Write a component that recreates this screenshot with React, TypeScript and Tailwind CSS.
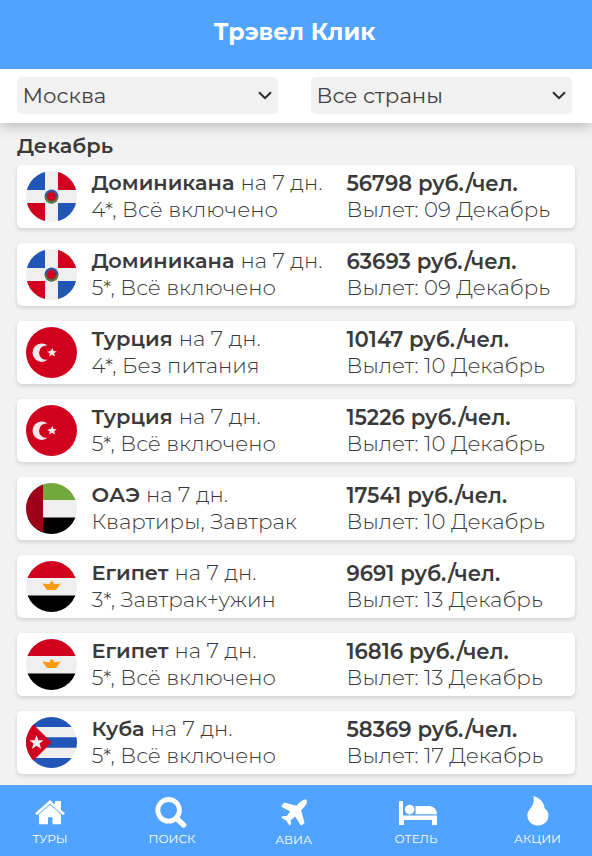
import React from "react";

type Country = "do" | "tr" | "ae" | "eg" | "cu";

interface Tour {
  flag: Country;
  country: string;
  details: string;
  price: string;
  departure: string;
}

const tours: Tour[] = [
  { flag: "do", country: "Доминикана", details: "4*, Всё включено", price: "56798", departure: "09 Декабрь" },
  { flag: "do", country: "Доминикана", details: "5*, Всё включено", price: "63693", departure: "09 Декабрь" },
  { flag: "tr", country: "Турция", details: "4*, Без питания", price: "10147", departure: "10 Декабрь" },
  { flag: "tr", country: "Турция", details: "5*, Всё включено", price: "15226", departure: "10 Декабрь" },
  { flag: "ae", country: "ОАЭ", details: "Квартиры, Завтрак", price: "17541", departure: "10 Декабрь" },
  { flag: "eg", country: "Египет", details: "3*, Завтрак+ужин", price: "9691", departure: "13 Декабрь" },
  { flag: "eg", country: "Египет", details: "5*, Всё включено", price: "16816", departure: "13 Декабрь" },
  { flag: "cu", country: "Куба", details: "5*, Всё включено", price: "58369", departure: "17 Декабрь" },
];

function FlagArt({ code }: { code: Country }) {
  switch (code) {
    case "do":
      return (
        <>
          <rect width="51" height="51" fill="#efefef" />
          <path d="M0 0H19V19H0ZM32 32H51V51H32Z" fill="#2255b8" />
          <path d="M32 0H51V19H32ZM0 32H19V51H0Z" fill="#d1001f" />
          <circle cx="25.5" cy="25.5" r="6.9" fill="#2f57a8" />
          <path d="M18.6 25.5a6.9 6.9 0 0 0 13.8 0Z" fill="#5b7a35" />
          <circle cx="25.5" cy="25.5" r="4.9" fill="#8a3446" />
          <circle cx="25.5" cy="25.5" r="4.1" fill="#d1001f" />
        </>
      );
    case "tr":
      return (
        <>
          <rect width="51" height="51" fill="#d1001f" />
          <path d="M21.8 18.8A9.2 9.2 0 1 0 21.8 32.6A7.1 7.1 0 1 1 21.8 18.8Z" fill="#f5e8eb" />
          <path d="M26.6 20.9L27.5 24L30.8 24.3L28.2 26.2L29 29.5L26 27.7L23.2 29.6L23.9 26.4L21.1 24.8L24.5 24.1Z" fill="#f5e8eb" />
        </>
      );
    case "ae":
      return (
        <>
          <rect width="51" height="51" fill="#efefef" />
          <path d="M0 0H51V17H0Z" fill="#73a83d" />
          <path d="M0 34.5H51V51H0Z" fill="#000" />
          <path d="M0 0H17V51H0Z" fill="#9e0019" />
        </>
      );
    case "eg":
      return (
        <>
          <rect width="51" height="51" fill="#efefef" />
          <path d="M0 0H51V17H0Z" fill="#d1001f" />
          <path d="M0 34.5H51V51H0Z" fill="#000" />
          <path d="M16.3 22.6L23.4 23.2L24.5 20.6H27L27.9 23.2L34.7 22.6L30 29H21Z" fill="#fb9b0d" />
        </>
      );
    case "cu":
      return (
        <>
          <rect width="51" height="51" fill="#efefef" />
          <path d="M0 0H51V10H0ZM0 20.3H51V30.7H0ZM0 41H51V51H0Z" fill="#2255b8" />
          <path d="M0 0L8 8L25.5 25.5L8 43L0 51Z" fill="#d1001f" />
          <path d="M10.5 18.2L12.4 23.2H17.7L13.5 26.6L15.1 32L10.5 28.8L5.9 32L7.5 26.6L3.3 23.2H8.6Z" fill="#f3f1f2" />
        </>
      );
  }
}

function Flag({ code }: { code: Country }) {
  return (
    <svg viewBox="0 0 51 51" className="h-[51px] w-[51px] shrink-0 rounded-full">
      <FlagArt code={code} />
    </svg>
  );
}

function Select({ label }: { label: string }) {
  return (
    <button className="flex h-[37px] w-[261px] items-center justify-between rounded-[5px] bg-[#f1f1f1] pr-[6px] pl-[5.5px] text-[21.3px] text-[#424242]">
      <span className="pt-px">{label}</span>
      <svg viewBox="0 0 14 9" className="h-[9px] w-[14px]" fill="none" stroke="#2a2a2a" strokeWidth="2">
        <path d="M1 1.2L7 7.2L13 1.2" />
      </svg>
    </button>
  );
}

function TourCard({ tour }: { tour: Tour }) {
  return (
    <article className="flex h-[63px] items-center rounded-[5px] bg-white pl-[9px] text-[21.3px] leading-[27px] font-light shadow-[0_2px_4px_rgba(0,0,0,0.14)]">
      <Flag code={tour.flag} />
      <div className="ml-[14.5px] w-[255px] shrink-0 pb-px whitespace-nowrap">
        <div className="h-[26px] leading-[25px]"><b className="mr-[0.6px] text-[20.9px] font-semibold">{tour.country}</b> на 7 дн.</div>
        <div>{tour.details}</div>
      </div>
      <div className="pb-px whitespace-nowrap">
        <div className="h-[26px] text-[21.2px] font-semibold">{tour.price} руб./чел.</div>
        <div>Вылет: {tour.departure}</div>
      </div>
    </article>
  );
}

const navItems = [
  {
    label: "ТУРЫ",
    box: "w-[100px]",
    icon: (
      <svg viewBox="0 0 30 25" className="mb-px h-[25px] w-[30px]" fill="#fff">
        <path d="M15 0L20 4.7V1H26V10L30 13.3L28 15.3L15 3.8L2 15.3L0 13.3Z" />
        <path d="M15 4.8L26 14.6V24.2H17.5V17.3H13V24.2H4V14.6Z" />
      </svg>
    ),
  },
  {
    label: "ПОИСК",
    box: "w-[144px]",
    icon: (
      <svg viewBox="0 0 32 31" className="mr-[2px] h-[31px] w-[32px]" fill="none" stroke="#fff">
        <circle cx="13.6" cy="13.3" r="10.8" strokeWidth="4.8" />
        <path d="M21.2 21L28.6 28" strokeWidth="5.4" strokeLinecap="round" />
      </svg>
    ),
  },
  {
    label: "АВИА",
    box: "w-[99px] pt-px",
    icon: (
      <svg viewBox="0 0 27 27" className="mb-[2px] ml-[2px] h-[27px] w-[27px]" fill="#fff">
        <path d="M17.8 4.2C20 1.9 23.4-.2 25.5.7C27 2.9 25.2 6.2 22.8 8.4L20.1 11.2L23.6 24L21.2 26.1C20.3 26.6 19.6 26.3 19.1 25.5L14.2 17.4L9.6 21.2L10.1 25.1L8.5 26.5L5.4 21.8L.3 18.8L1.7 17L5.7 17L9.2 12.4L1.2 8.2C.4 7.6.3 6.9.9 6.2L3.3 3.4L15.3 6.8Z" />
      </svg>
    ),
  },
  {
    label: "ОТЕЛЬ",
    box: "w-[146px]",
    icon: (
      <svg viewBox="0 0 38 24" className="ml-[3px] h-[24px] w-[38px]" fill="#fff">
        <path d="M0 1.2Q0 0 1.2 0H4V14.5H38V24H33V19H5V24H0Z" />
        <circle cx="10.6" cy="8.6" r="4.8" />
        <path d="M16.5 5H31Q37.5 6 38 13.2H16.5Z" />
      </svg>
    ),
  },
  {
    label: "АКЦИИ",
    box: "w-[97px]",
    icon: (
      <svg viewBox="0 0 22 30" className="mb-[3px] h-[30px] w-[22px]" fill="#fff">
        <path d="M6.2 0C12.5 1.8 17.2 6.2 17.6 12.2C20.2 14 21.4 16.4 21.4 19.3C21.4 25.5 16.8 29.5 11 29.5C5 29.5.4 25.3.4 19.5C.4 12.8 9.2 10 6.2 0Z" />
      </svg>
    ),
  },
];

export default function App() {
  return (
    <div className="flex h-[856px] w-[592px] flex-col overflow-hidden bg-[#f2f2f2] font-[Montserrat,Inter,sans-serif] text-[#3a3a3a]">
      <header className="z-20 flex h-[69px] shrink-0 items-center justify-center bg-[#50a3ff] pr-[3px] pb-[5px] text-[23.6px] font-bold text-white">
        <h1>Трэвел Клик</h1>
      </header>
      <div className="z-10 flex h-[54px] shrink-0 gap-[33px] bg-white pt-[8px] pl-[17px] shadow-[0_1px_14px_rgba(0,0,0,0.3)]">
        <Select label="Москва" />
        <Select label="Все страны" />
      </div>
      <main className="flex h-[662px] shrink-0 flex-col pr-[17px] pl-[17px]">
        <h2 className="h-[42px] shrink-0 pt-[9px] text-[20.9px] leading-[27px] font-semibold">Декабрь</h2>
        <div className="flex flex-col gap-[15px]">
          {tours.map((tour, i) => (
            <TourCard key={i} tour={tour} />
          ))}
        </div>
      </main>
      <nav className="z-10 flex h-[71px] shrink-0 bg-[#50a3ff] text-[12px] text-white">
        {navItems.map((item) => (
          <a key={item.label} className={`flex flex-col items-center ${item.box}`}>
            <span className="flex h-[45px] items-center pt-[10px]">{item.icon}</span>
            <span className="leading-[17px]">{item.label}</span>
          </a>
        ))}
      </nav>
    </div>
  );
}
